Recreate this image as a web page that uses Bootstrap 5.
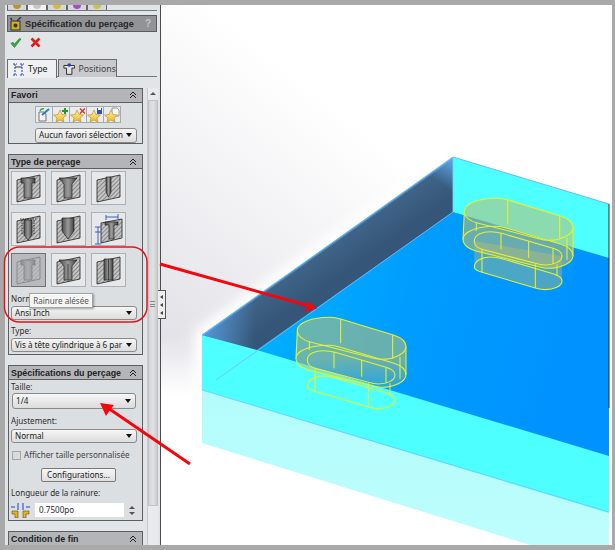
<!DOCTYPE html>
<html lang="fr">
<head>
    <meta charset="UTF-8">
    <meta name="viewport" content="width=device-width, initial-scale=1.0">
    <title>Spécification du perçage</title>
    <link href="https://cdn.jsdelivr.net/npm/bootstrap@5.3.0/dist/css/bootstrap.min.css" rel="stylesheet">
    <style>
        html, body { margin: 0; width: 615px; height: 550px; overflow: hidden; background: #a9a9a9; }
        body, .btn, .card, .nav-link { font-family: "Noto Sans", "Liberation Sans", sans-serif; font-size: 8.1px; color: #2c2c2c; line-height: 12px; }
        .app-win { position: relative; width: 615px; height: 550px; padding: 5px 3px 5px 5px; }
        .side { width: 155px; height: 540px; background: #e2e5e8; padding-left: 2px; overflow: hidden; flex: none; }
        .mini-tabs { height: 6px; width: 150px; border-bottom: 1px solid #777; gap: 0; }
        .mini-tabs span { width: 20px; height: 5px; background: #d5d7da; border: 1px solid #666; border-top: 0; border-bottom: 0; position: relative; overflow: hidden; }
        .mini-tabs i { display: block; width: 8px; height: 4px; margin: 0 auto; border-radius: 0 0 4px 4px; }
        .title-bar { width: 150px; height: 17px; margin-top: 4px; background: #929396; border: 1px solid #5c5c5c; padding-left: 2px; font-family: "Liberation Sans", sans-serif; font-weight: 700; font-size: 9.2px; color: #262626; white-space: nowrap; }
        .title-bar svg { margin-right: 2px; flex: none; }
        .title-bar b { margin-left: auto; margin-right: 5px; color: #c4c5c8; font-size: 10px; }
        .ok-row { height: 15px; margin-top: 3px; padding-left: 3px; gap: 8px; }
        .tab-row { margin-top: 9px; width: 150px; height: 18px; border-bottom: 1px solid #777; flex-wrap: nowrap; gap: 1px; }
        .tab-row .nav-link { height: 18px; padding: 0 0 0 4px; border: 1px solid #6d6d6d; border-bottom: 0; border-radius: 0; background: #c8cacd; color: #444; font-size: 8.8px; gap: 3px; margin: 0; }
        .tab-row .nav-link.active { background: #eef0f2; color: #222; height: 19px; }
        .tab-type { width: 50px; }
        .tab-pos { width: 59px; }
        .side-scroll { margin-top: 11px; }
        .side-col { width: 135px; margin-left: 1px; flex: none; }
        .pm-box { border: 1px solid #5e5e5e; border-radius: 0; background: #dcdfe2; margin-bottom: 10px; --bs-card-bg: #dcdfe2; }
        .pm-head { height: 14px; background: #b3b5b9; border-bottom: 1px solid #5e5e5e; padding: 0 2px; font-family: "Liberation Sans", sans-serif; font-weight: 700; font-size: 8.9px; color: #222; border-radius: 0; white-space: nowrap; }
        .pm-head svg { margin-left: auto; margin-right: 3px; }
        .pm-fav { height: 56px; }
        .pm-type { height: 201px; }
        .pm-spec { height: 156px; margin-bottom: 10px; }
        .star-row { margin: 3px 0 0 26px; }
        .star-btn { width: 18px; height: 17px; padding: 0; border: 1px solid #a8aaad; border-radius: 0; background: #e9ebed; margin-right: -1px; }
        .drop { height: 14px; border: 1px solid #8a8a8a; border-radius: 3px; background: linear-gradient(#f6f6f6, #dcdcdc); padding: 0 4px 0 3px; color: #222; white-space: nowrap; overflow: hidden; }
        .drop::after { content: ""; margin-left: auto; border: 3px solid transparent; border-top: 4px solid #111; border-bottom: 0; }
        .drop-fav { margin: 5px 0 0 26px; width: 102px; height: 16px; }
        .drop-wide { margin: 1px 0 0 2px; width: 126px; }
        .hole-grid { display: grid; grid-template-columns: repeat(3, 35px); gap: 7px 5px; padding: 2px 0 0 2px; }
        .hole-btn { width: 35px; height: 34px; padding: 0; border: 1px solid #aeb0b3; border-radius: 0; background: #e6e8ea; display: block; }
        .hole-btn.active { background: #b8babd; border-color: #707275; }
        .fld-lbl { height: 12px; padding-left: 2px; }
        .lbl-norme { margin-top: 6px; }
        .lbl-type { margin-top: 5px; }
        .lbl-taille { margin-top: 1px; }
        .taille-drop { height: 16px; margin-left: 3px; width: 124px; }
        .lbl-ajust { margin-top: 6px; }
        .ajust-drop { margin-top: 2px; }
        .chk-row { margin-top: 6px; height: 12px; padding-left: 3px; gap: 3px; color: #444; }
        .chk-box { width: 9px; height: 9px; border: 1px solid #a5a5a5; background: #d8dadc; flex: none; }
        .cfg-btn { display: block; margin: 7px 0 0 32px; width: 75px; height: 14px; padding: 0; border: 1px solid #7b7b7b; border-radius: 2px; background: linear-gradient(#f6f6f6, #dedede); line-height: 12px; color: #222; }
        .lbl-long { margin-top: 5px; }
        .len-row { margin-top: 3px; padding-left: 2px; }
        .len-input { width: 89px; height: 14px; margin-left: 5px; background: #fff; padding-left: 4px; line-height: 14px; }
        .spin { margin-left: 3px; width: 10px; height: 14px; gap: 3px; }
        .spin i { border: 3px solid transparent; }
        .spin i:first-child { border-bottom: 3px solid #555; border-top: 0; }
        .spin i:last-child { border-top: 3px solid #555; border-bottom: 0; }
        .side-bar { margin-left: 4px; width: 11px; height: 460px; background: #e8eaec; border-left: 1px solid #c9cbce; flex: none; }
        .side-bar em { display: block; width: 0; margin: 4px auto 5px; border: 3px solid transparent; border-bottom: 3px solid #555; border-top: 0; }
        .side-bar div { height: 406px; background: linear-gradient(90deg, #d2d4d7, #e0e2e4 50%, #c9cbce); border: 1px solid #c0c2c5; }
        .work { width: 452px; height: 540px; border-left: 1px solid #4b4b4b; background: #fff; flex: none; }
        .tip-box { position: absolute; left: 29px; top: 293px; width: 64px; height: 15px; background: #f5f5f5; border: 1px solid #a5a5a5; box-shadow: 1px 1px 2px rgba(0,0,0,.35); color: #555; line-height: 13px; text-align: center; white-space: nowrap; }
        .split-tab { position: absolute; left: 158px; top: 290px; width: 8px; height: 29px; background: #eceef0; border: 1px solid #555; border-left: 0; }
        .split-tab i { border: 2px solid transparent; border-right: 3px solid #444; border-left: 0; }
        .split-grip { position: absolute; left: 150px; top: 301px; width: 5px; height: 6px; border-top: 1px solid #888; border-bottom: 1px solid #888; }
        .split-grip::after { content: ""; display: block; margin-top: 2px; border-top: 1px solid #888; }
        .ink-layer { position: absolute; left: 0; top: 0; pointer-events: none; }
        .slot-line { fill: none; stroke: #e6f22c; stroke-width: 3.2; }
    </style>
</head>
<body>
    <div class="app-win d-flex">
        <div class="side">
            <div class="mini-tabs d-flex">
                <span><i style="background:#b8962c"></i></span>
                <span style="background:#f1f2f3"><i style="background:#c5c7ca"></i></span>
                <span><i style="background:#d9bd2c"></i></span>
                <span><i style="background:#a24fc0"></i></span>
                <span><i style="background:#c9c24c"></i></span>
            </div>

            <div class="title-bar d-flex align-items-center">
                <svg width="13" height="14" viewBox="0 0 13 14">
                    <rect x="1" y="4" width="9" height="9" fill="#c9b21c" stroke="#333"/>
                    <circle cx="5.500" cy="8.500" r="2" fill="#3c3c1c"/>
                    <path d="M7 4 L11 0 M2 3 L0.500 1" stroke="#333" stroke-width="1.400"/>
                </svg>
                Spécification du perçage
                <b>?</b>
            </div>

            <div class="ok-row d-flex align-items-center">
                <svg width="12" height="12" viewBox="0 0 12 12"><path d="M1 6.500 L4.500 10.500 L11 2 L9.500 1.500 L4.500 7 L2.500 5z" fill="#2fae3c" stroke="#1c7a28" stroke-width=".6"/></svg>
                <svg width="11" height="11" viewBox="0 0 11 11"><path d="M1.500 1.500 L9.500 9.500 M9.500 1.500 L1.500 9.500" stroke="#d81e1e" stroke-width="2.600"/></svg>
            </div>

            <ul class="nav tab-row">
                <li class="nav-item">
                    <a class="nav-link tab-type active d-flex align-items-center" href="#">
                        <svg width="13" height="13" viewBox="0 0 13 13" fill="none" stroke="#2a3fc0"><path d="M1 1 h4 M1 12 h4 M3 1 v11 M8 1 h4 M8 12 h4 M10 1 v11" stroke-dasharray="2 1"/><path d="M3 4 h7" stroke="#333"/></svg>
                        <span>Type</span>
                    </a>
                </li>
                <li class="nav-item">
                    <a class="nav-link tab-pos d-flex align-items-center" href="#">
                        <svg width="14" height="14" viewBox="0 0 14 14"><path d="M1 3 h12 v3 h-3 v7 h-6 v-7 h-3z" fill="#e4e4e4" stroke="#222"/><circle cx="7" cy="2.500" r="2" fill="#2a3fc0"/></svg>
                        <span>Positions</span>
                    </a>
                </li>
            </ul>

            <div class="side-scroll d-flex">
                <div class="side-col">
                    <div class="card pm-box pm-fav">
                        <div class="pm-head d-flex align-items-center">Favori
                            <svg width="8" height="8" viewBox="0 0 8 8" fill="none" stroke="#222"><path d="M1 4 L4 1 L7 4 M1 7 L4 4 L7 7"/></svg>
                        </div>
                        <div class="star-row d-flex">
                            <button class="btn star-btn" type="button">
                                <svg width="16" height="15" viewBox="0 0 16 15"><path d="M3 5 h5 l2 2 v7 h-7z" fill="#f4f4f4" stroke="#777"/><path d="M6 8 L13 2" stroke="#2a7fb8" stroke-width="2"/><path d="M4 4 a3 3 0 0 1 4 -2" stroke="#2e9a3c" fill="none" stroke-width="1.300"/></svg>
                            </button>
                            <button class="btn star-btn" type="button">
                                <svg width="16" height="15" viewBox="0 0 16 15"><use href="#favStar"/><path d="M12 1 v6 M9 4 h6" stroke="#1d9a2e" stroke-width="2"/></svg>
                            </button>
                            <button class="btn star-btn" type="button">
                                <svg width="16" height="15" viewBox="0 0 16 15"><use href="#favStar"/><path d="M10 1.500 L15 6.500 M15 1.500 L10 6.500" stroke="#d83a3a" stroke-width="1.600"/></svg>
                            </button>
                            <button class="btn star-btn" type="button">
                                <svg width="16" height="15" viewBox="0 0 16 15"><use href="#favStar"/><rect x="10" y="1" width="5" height="6" fill="#2a55c4"/><rect x="11" y="1" width="3" height="2" fill="#fff"/></svg>
                            </button>
                            <button class="btn star-btn" type="button">
                                <svg width="16" height="15" viewBox="0 0 16 15"><path d="M8 1 h5 l2 2 v6 h-7z" fill="#fafafa" stroke="#999"/><use href="#favStar"/></svg>
                            </button>
                        </div>
                        <div class="drop drop-fav d-flex align-items-center">Aucun favori sélection</div>
                    </div>

                    <div class="card pm-box pm-type">
                        <div class="pm-head d-flex align-items-center">Type de perçage
                            <svg width="8" height="8" viewBox="0 0 8 8" fill="none" stroke="#222"><path d="M1 4 L4 1 L7 4 M1 7 L4 4 L7 7"/></svg>
                        </div>
                        <div class="hole-grid">
                            <button class="btn hole-btn" type="button"><svg width="33" height="32" viewBox="0 0 33 32"><use href="#holeBlock"/><path d="M9 6 h14 v5 h-3 v15 h-8 v-15 h-3z" fill="url(#holeShade)" stroke="#222" stroke-width=".7"/></svg></button>
                            <button class="btn hole-btn" type="button"><svg width="33" height="32" viewBox="0 0 33 32"><use href="#holeBlock"/><path d="M7 6 h18 l-5 6 v14 h-8 v-14z" fill="url(#holeShade)" stroke="#222" stroke-width=".7"/></svg></button>
                            <button class="btn hole-btn" type="button"><svg width="33" height="32" viewBox="0 0 33 32"><use href="#holeBlock"/><path d="M14 5 h5 v15 l-2.500 5 l-2.500 -5z" fill="url(#holeShade)" stroke="#222" stroke-width=".7"/></svg></button>
                            <button class="btn hole-btn" type="button"><svg width="33" height="32" viewBox="0 0 33 32"><use href="#holeBlock"/><path d="M12 7 h8 v15 l-4 5 l-4 -5z" fill="url(#holeShade)" stroke="#222" stroke-width=".7"/><path d="M8 6 h16 M10 7 v14 M22 7 v14" stroke="#111" stroke-width=".8" stroke-dasharray="1.500 1" fill="none"/></svg></button>
                            <button class="btn hole-btn" type="button"><svg width="33" height="32" viewBox="0 0 33 32"><use href="#holeBlock"/><path d="M10 5 h12 v13 l-6 8 l-6 -8z" fill="url(#holeShade)" stroke="#222" stroke-width=".7"/></svg></button>
                            <button class="btn hole-btn" type="button"><svg width="33" height="32" viewBox="0 0 33 32"><path d="M9 10 L30 6 V25 L9 30z" fill="url(#holeHatchP)" stroke="#222" stroke-width=".8"/><path d="M13 9 h13 v3 h-4 v14 h-5 v-14 h-4z" fill="url(#holeShade)" stroke="#222" stroke-width=".7"/><path d="M3 14 h6 M3 19 h6 M3 31 h6 M6 14 v5 M6 19 v12 M14 4 h12 M14 2 v5 M26 1 v5" stroke="#2a4fd0" fill="none" stroke-width=".9"/></svg></button>
                            <button class="btn hole-btn active" type="button"><svg width="33" height="32" viewBox="0 0 33 32" opacity=".38"><use href="#holeBlock"/><path d="M9 6 h14 v5 h-3 v15 h-8 v-15 h-3z" fill="url(#holeShade)" stroke="#222" stroke-width=".7"/></svg></button>
                            <button class="btn hole-btn" type="button"><svg width="33" height="32" viewBox="0 0 33 32"><use href="#holeBlock"/><path d="M7 6 h18 l-5 6 v14 h-8 v-14z" fill="url(#holeShade)" stroke="#222" stroke-width=".7"/><path d="M16 10 v16" stroke="#222" stroke-width=".7"/></svg></button>
                            <button class="btn hole-btn" type="button"><svg width="33" height="32" viewBox="0 0 33 32"><use href="#holeBlock"/><path d="M12 5 h9 v21 h-9z" fill="url(#holeShade)" stroke="#222" stroke-width=".7"/><path d="M16.500 5 v21" stroke="#222" stroke-width=".7"/></svg></button>
                        </div>
                        <div class="fld-lbl lbl-norme">Norme:</div>
                        <div class="drop drop-wide d-flex align-items-center">Ansi Inch</div>
                        <div class="fld-lbl lbl-type">Type:</div>
                        <div class="drop drop-wide d-flex align-items-center">Vis à tête cylindrique à 6 par</div>
                    </div>

                    <div class="card pm-box pm-spec">
                        <div class="pm-head d-flex align-items-center">Spécifications du perçage
                            <svg width="8" height="8" viewBox="0 0 8 8" fill="none" stroke="#222"><path d="M1 4 L4 1 L7 4 M1 7 L4 4 L7 7"/></svg>
                        </div>
                        <div class="fld-lbl lbl-taille">Taille:</div>
                        <div class="drop taille-drop d-flex align-items-center">1/4</div>
                        <div class="fld-lbl lbl-ajust">Ajustement:</div>
                        <div class="drop drop-wide ajust-drop d-flex align-items-center">Normal</div>
                        <div class="chk-row d-flex align-items-center"><span class="chk-box"></span>Afficher taille personnalisée</div>
                        <button class="btn cfg-btn" type="button">Configurations...</button>
                        <div class="fld-lbl lbl-long">Longueur de la rainure:</div>
                        <div class="len-row d-flex align-items-center">
                            <svg width="19" height="16" viewBox="0 0 19 16">
                                <path d="M0 5 h4 M7 1 v7 M12 1 v7 M15 5 h4" stroke="#1f3fc0" fill="none"/>
                                <path d="M1 9 h6 v7 h-3 v-4 h-3z M12 9 h6 v3 h-3 v4 h-3z" fill="#e9b21a" stroke="#333" stroke-width=".5"/>
                            </svg>
                            <div class="len-input">0.7500po</div>
                            <div class="spin d-flex flex-column align-items-center justify-content-center"><i></i><i></i></div>
                        </div>
                    </div>

                    <div class="card pm-box">
                        <div class="pm-head d-flex align-items-center">Condition de fin
                            <svg width="8" height="8" viewBox="0 0 8 8" fill="none" stroke="#222"><path d="M1 4 L4 1 L7 4 M1 7 L4 4 L7 7"/></svg>
                        </div>
                    </div>
                </div>
                <div class="side-bar"><em></em><div></div></div>
            </div>
        </div>

        <div class="work">
            <svg width="451" height="540" viewBox="161 5 451 540">
                <defs>
                    <linearGradient id="bgShade" gradientUnits="userSpaceOnUse" x1="161" y1="330" x2="340" y2="110">
                        <stop offset="0" stop-color="#e2e2e8"/>
                        <stop offset=".45" stop-color="#f0f0f3"/>
                        <stop offset="1" stop-color="#ffffff"/>
                    </linearGradient>
                    <linearGradient id="bgLower" gradientUnits="userSpaceOnUse" x1="0" y1="335" x2="0" y2="395">
                        <stop offset="0" stop-color="#fff" stop-opacity="0"/>
                        <stop offset="1" stop-color="#fff"/>
                    </linearGradient>
                    <linearGradient id="floorBlue" x1="0" y1="0" x2="1" y2="0.2">
                        <stop offset="0" stop-color="#00b4ff"/>
                        <stop offset=".5" stop-color="#009cff"/>
                        <stop offset="1" stop-color="#0092ff"/>
                    </linearGradient>
                    <linearGradient id="wallDark" gradientUnits="userSpaceOnUse" x1="330" y1="244" x2="348" y2="269.400">
                        <stop offset="0" stop-color="#6ab4f4"/>
                        <stop offset=".08" stop-color="#3f6488"/>
                        <stop offset="1" stop-color="#355678"/>
                    </linearGradient>
                    <linearGradient id="wallLeft" gradientUnits="userSpaceOnUse" x1="205" y1="0" x2="255" y2="0">
                        <stop offset="0" stop-color="#5aa4ee" stop-opacity=".75"/>
                        <stop offset="1" stop-color="#5aa4ee" stop-opacity="0"/>
                    </linearGradient>
                    <linearGradient id="wallCorner" gradientUnits="userSpaceOnUse" x1="453" y1="160" x2="438" y2="182">
                        <stop offset="0" stop-color="#62aef4" stop-opacity=".85"/>
                        <stop offset="1" stop-color="#62aef4" stop-opacity="0"/>
                    </linearGradient>
                    <linearGradient id="paleBand" gradientUnits="userSpaceOnUse" x1="0" y1="400" x2="0" y2="545">
                        <stop offset="0" stop-color="#b4fcfc"/>
                        <stop offset="1" stop-color="#bdfdfd"/>
                    </linearGradient>
                    <linearGradient id="wallFade" x1="0" y1="0" x2="0" y2="1">
                        <stop offset=".6" stop-color="#bebe6e" stop-opacity=".55"/>
                        <stop offset="1" stop-color="#bebe6e" stop-opacity=".2"/>
                    </linearGradient>
                    <filter id="softGlow" x="-10%" y="-10%" width="120%" height="120%"><feGaussianBlur stdDeviation="6"/></filter>
                    <path id="slotTop" d="M52 92 C52 68 95 52 150 52 C165 52 175 55 182 57 L340 105 C362 112 378 125 378 140 C378 162 340 178 305 178 C295 178 285 176 275 173 L88 125 C70 120 52 108 52 92z"/>
                    <path id="slotMid" d="M48 175 C48 152 90 136 145 136 C160 136 170 139 178 141 L340 189 C362 196 378 209 378 224 C378 246 340 262 305 262 C295 262 285 260 275 257 L84 209 C66 204 48 192 48 175z"/>
                    <path id="slotIn" d="M82 180 C82 162 105 152 130 152 C145 152 155 154 165 157 L318 202 C335 207 345 216 345 225 C345 242 320 252 295 252 C285 252 275 250 265 247 L105 205 C92 201 82 192 82 180z"/>
                    <path id="slotLow" d="M82 258 C82 240 105 228 130 228 C145 228 155 230 165 233 L318 278 C335 283 345 290 345 300 C345 316 320 326 295 326 C285 326 275 324 265 321 L105 274 C92 270 82 266 82 258z"/>
                    <path id="slotBody" d="M52 92 C52 68 95 52 150 52 C165 52 175 55 182 57 L340 105 C362 112 378 125 378 140 V224 C378 246 340 262 305 262 C295 262 285 260 275 257 L84 209 C66 204 48 192 48 175z"/>
                    <path id="slotShaft" d="M82 180 V258 C82 266 92 270 105 274 L265 321 C275 324 285 326 295 326 C320 326 345 316 345 300 V225z"/>
                </defs>
                <rect x="161" y="5" width="451" height="540" fill="url(#bgShade)"/>
                <rect x="161" y="335" width="451" height="210" fill="url(#bgLower)"/>
                <path d="M202 335 L453 157 L612 205 V545 H540 L202 440z" fill="#fff" stroke="#fff" stroke-width="16" filter="url(#softGlow)"/>
                <path d="M202 390 L609 512 V545 H530 L202 443z" fill="url(#paleBand)"/>
                <path d="M202 335 L453 157 L609 204 V513 L202 390z" fill="#4dffff"/>
                <path d="M453 212 L609 258 V456 L257 350z" fill="url(#floorBlue)"/>
                <path d="M202 335 L453 157 V212 L257 350z" fill="url(#wallDark)"/>
                <path d="M202 335 L453 157 V212 L257 350z" fill="url(#wallLeft)"/>
                <path d="M202 335 L453 157 V212 L257 350z" fill="url(#wallCorner)"/>
                <path d="M202 335 L453 157 L609 204" fill="none" stroke="#66b8ff" stroke-width="1"/>
                <path d="M216 380 L453 212" fill="none" stroke="#7fb6f5" stroke-width=".8"/>
                <path d="M453 157 V212" fill="none" stroke="#7ed0ff" stroke-width=".8"/>
                <path d="M202 390 L609 512" fill="none" stroke="#6cc4ff" stroke-width=".8"/>
                <path d="M609 204 V408" fill="none" stroke="#2b2b2b" stroke-width="1"/>

                <g transform="translate(280 300) scale(.3333)">
                    <use href="#slotBody" fill="url(#wallFade)"/>
                    <g class="slot-line">
                        <use href="#slotTop"/><use href="#slotMid"/><use href="#slotIn"/><use href="#slotLow"/>
                        <path d="M52 92 L48 175 M378 140 V224 M182 57 V130 M338 105 V176 M88 125 V150 M162 156 V205 M245 180 V230 M318 202 V250 M360 170 V236 M105 205 V274 M265 250 V321 M330 250 V285"/>
                    </g>
                </g>
                <g transform="translate(447 181) scale(.3333)">
                    <use href="#slotBody" fill="#bebe6e" fill-opacity=".55"/>
                    <use href="#slotShaft" fill="#bebe6e" fill-opacity=".4"/>
                    <g class="slot-line">
                        <use href="#slotTop"/><use href="#slotMid"/><use href="#slotIn"/><use href="#slotLow"/>
                        <path d="M52 92 L48 175 M378 140 V224 M182 57 V130 M338 105 V176 M88 125 V150 M162 156 V205 M245 180 V230 M318 202 V250 M360 170 V236 M105 205 V274 M265 250 V321 M330 250 V285"/>
                    </g>
                </g>
            </svg>
        </div>

        <div class="split-grip"></div>
        <div class="split-tab d-flex flex-column align-items-center justify-content-center gap-1"><i></i><i></i><i></i></div>
        <div class="tip-box">Rainure alésée</div>

        <svg class="ink-layer" width="615" height="550" viewBox="0 0 615 550">
            <rect x="4.500" y="247" width="142.500" height="75" rx="15" fill="none" stroke="#e4141c" stroke-width="1.500"/>
            <path d="M160 264 L311 306.500" stroke="#f4060c" stroke-width="3" fill="none"/>
            <path d="M317 308.500 L306.500 300 L309.500 306 L302.500 312z" fill="#f4060c"/>
            <path d="M190 464 L108 408" stroke="#f4060c" stroke-width="3" fill="none"/>
            <path d="M100 403 L114 405 L110 410 L106 416z" fill="#f4060c"/>
        </svg>
    </div>

    <svg width="0" height="0" class="position-absolute">
        <defs>
            <pattern id="holeHatchP" width="3" height="3" patternUnits="userSpaceOnUse" patternTransform="rotate(45)">
                <rect width="3" height="3" fill="#c4c4c4"/>
                <rect width="1" height="3" fill="#8a8a8a"/>
            </pattern>
            <linearGradient id="holeShade" x1="0" y1="0" x2="1" y2="0">
                <stop offset="0" stop-color="#4a4a4a"/>
                <stop offset=".5" stop-color="#9a9a9a"/>
                <stop offset="1" stop-color="#404040"/>
            </linearGradient>
            <linearGradient id="starGold" x1="0" y1="0" x2="0" y2="1">
                <stop offset="0" stop-color="#fff1a0"/>
                <stop offset="1" stop-color="#eeb62c"/>
            </linearGradient>
            <g id="holeBlock"><path d="M5 8 L28 3 V25 L5 30z" fill="url(#holeHatchP)" stroke="#222" stroke-width=".8"/></g>
            <path id="favStar" d="M7 3 L9 7.500 L13.500 8 L10 11 L11 15 L7 13 L3 15 L4 11 L.5 8 L5 7.500z" fill="url(#starGold)" stroke="#b08a20" stroke-width=".6"/>
        </defs>
    </svg>

    <script src="https://cdn.jsdelivr.net/npm/bootstrap@5.3.0/dist/js/bootstrap.bundle.min.js"></script>
</body>
</html>
